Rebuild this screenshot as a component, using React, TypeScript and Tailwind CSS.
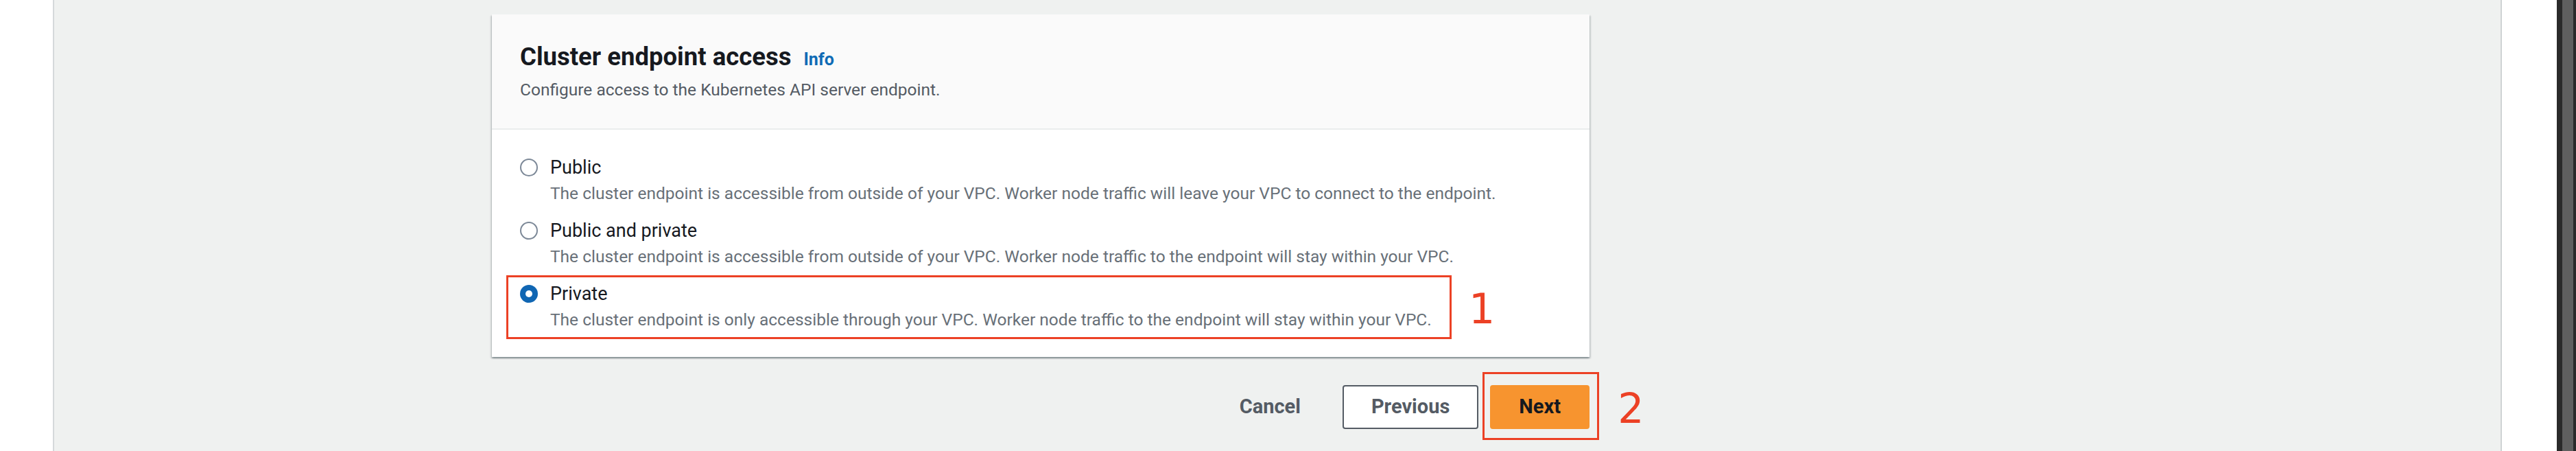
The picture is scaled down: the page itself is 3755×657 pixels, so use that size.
import React, { useState } from 'react';

type EndpointOption = {
    id: string;
    label: string;
    description: string;
};

const OPTIONS: EndpointOption[] = [
    {
        id: 'public',
        label: 'Public',
        description: 'The cluster endpoint is accessible from outside of your VPC. Worker node traffic will leave your VPC to connect to the endpoint.',
    },
    {
        id: 'public-private',
        label: 'Public and private',
        description: 'The cluster endpoint is accessible from outside of your VPC. Worker node traffic to the endpoint will stay within your VPC.',
    },
    {
        id: 'private',
        label: 'Private',
        description: 'The cluster endpoint is only accessible through your VPC. Worker node traffic to the endpoint will stay within your VPC.',
    },
];

const RadioDot: React.FC<{ checked: boolean }> = ({ checked }) =>
    checked ? (
        <span className="w-[26px] h-[26px] rounded-full bg-[#1066b3] flex items-center justify-center shrink-0">
            <span className="w-[10px] h-[10px] rounded-full bg-white" />
        </span>
    ) : (
        <span className="w-[26px] h-[26px] rounded-full border-2 border-[#7d8998] bg-white shrink-0" />
    );

export default function App() {
    const [selected, setSelected] = useState('private');

    return (
        <div className="flex h-[657px] w-full font-['Roboto','Liberation_Sans',sans-serif] overflow-hidden">
            {/* left rail */}
            <div className="w-[79px] bg-white border-r-2 border-[#d5d9db] shrink-0" />

            {/* main content */}
            <div className="flex-1 bg-[#eff1f0] pl-[638px] pt-[21px]">
                <div className="w-[1600px] bg-white shadow-[0_2px_2px_0_rgba(0,28,36,0.3),2px_2px_2px_0_rgba(0,28,36,0.12),-2px_2px_2px_0_rgba(0,28,36,0.12)]">
                    <div className="bg-[#fafafa] border-b-2 border-[#eaeded] px-[41px] pt-[40px] pb-[40px]">
                        <div className="flex items-baseline gap-[18px] leading-[44px]">
                            <h2 className="text-[36.5px] font-bold text-[#16191f]">Cluster endpoint access</h2>
                            <a className="text-[25px] font-bold text-[#0f6bb5] cursor-pointer">Info</a>
                        </div>
                        <p className="mt-[6px] text-[24.5px] leading-[32px] text-[#545b64]">
                            Configure access to the Kubernetes API server endpoint.
                        </p>
                    </div>

                    <div className="px-[41px] pt-[35px] pb-[36px] flex flex-col gap-[16px]">
                        {OPTIONS.map(opt => (
                            <div
                                key={opt.id}
                                onClick={() => setSelected(opt.id)}
                                className="relative flex gap-[18px] cursor-pointer"
                            >
                                <div className="h-[40px] flex items-center">
                                    <RadioDot checked={selected === opt.id} />
                                </div>
                                <div>
                                    <div className="text-[27px] leading-[40px] text-[#16191f]">{opt.label}</div>
                                    <div className="text-[24.5px] leading-[36px] text-[#687078]">{opt.description}</div>
                                </div>
                                {opt.id === 'private' && (
                                    <>
                                        <div className="absolute left-[-20px] top-[-7px] w-[1378px] h-[93px] border-[3px] border-[#ec4125] pointer-events-none" />
                                        <span className="absolute left-[1383px] top-[12px] text-[60px] leading-[60px] text-[#ec4125] font-['DejaVu_Sans',sans-serif]">1</span>
                                    </>
                                )}
                            </div>
                        ))}
                    </div>
                </div>

                {/* footer actions */}
                <div className="w-[1600px] mt-[41px] flex justify-end items-center gap-[17px]">
                    <button className="h-[64px] px-[40px] mr-[4px] text-[29px] font-bold text-[#545b64]">Cancel</button>
                    <button className="h-[64px] px-[40px] text-[29px] font-bold text-[#545b64] bg-white border-2 border-[#545b64] rounded-[4px]">
                        Previous
                    </button>
                    <div className="relative">
                        <button className="h-[64px] px-[40px] text-[29px] font-bold text-[#16191f] bg-[#f7942f] border-2 border-[#f7942f] rounded-[4px]">
                            Next
                        </button>
                        <div className="absolute left-[-11px] top-[-19px] w-[170px] h-[99px] border-[3px] border-[#ec4125] pointer-events-none" />
                        <span className="absolute left-[186px] top-[4px] text-[60px] leading-[60px] text-[#ec4125] font-['DejaVu_Sans',sans-serif]">2</span>
                    </div>
                </div>
            </div>

            {/* right panel + scrollbar */}
            <div className="w-[80px] bg-white border-l-2 border-[#cfd3d4] box-content shrink-0" />
            <div className="flex shrink-0">
                <div className="w-[8px] bg-[#2a2a2a]" />
                <div className="w-[16px] bg-[#5f5f5f]" />
                <div className="w-[4px] bg-[#2a2a2a]" />
            </div>
        </div>
    );
}
